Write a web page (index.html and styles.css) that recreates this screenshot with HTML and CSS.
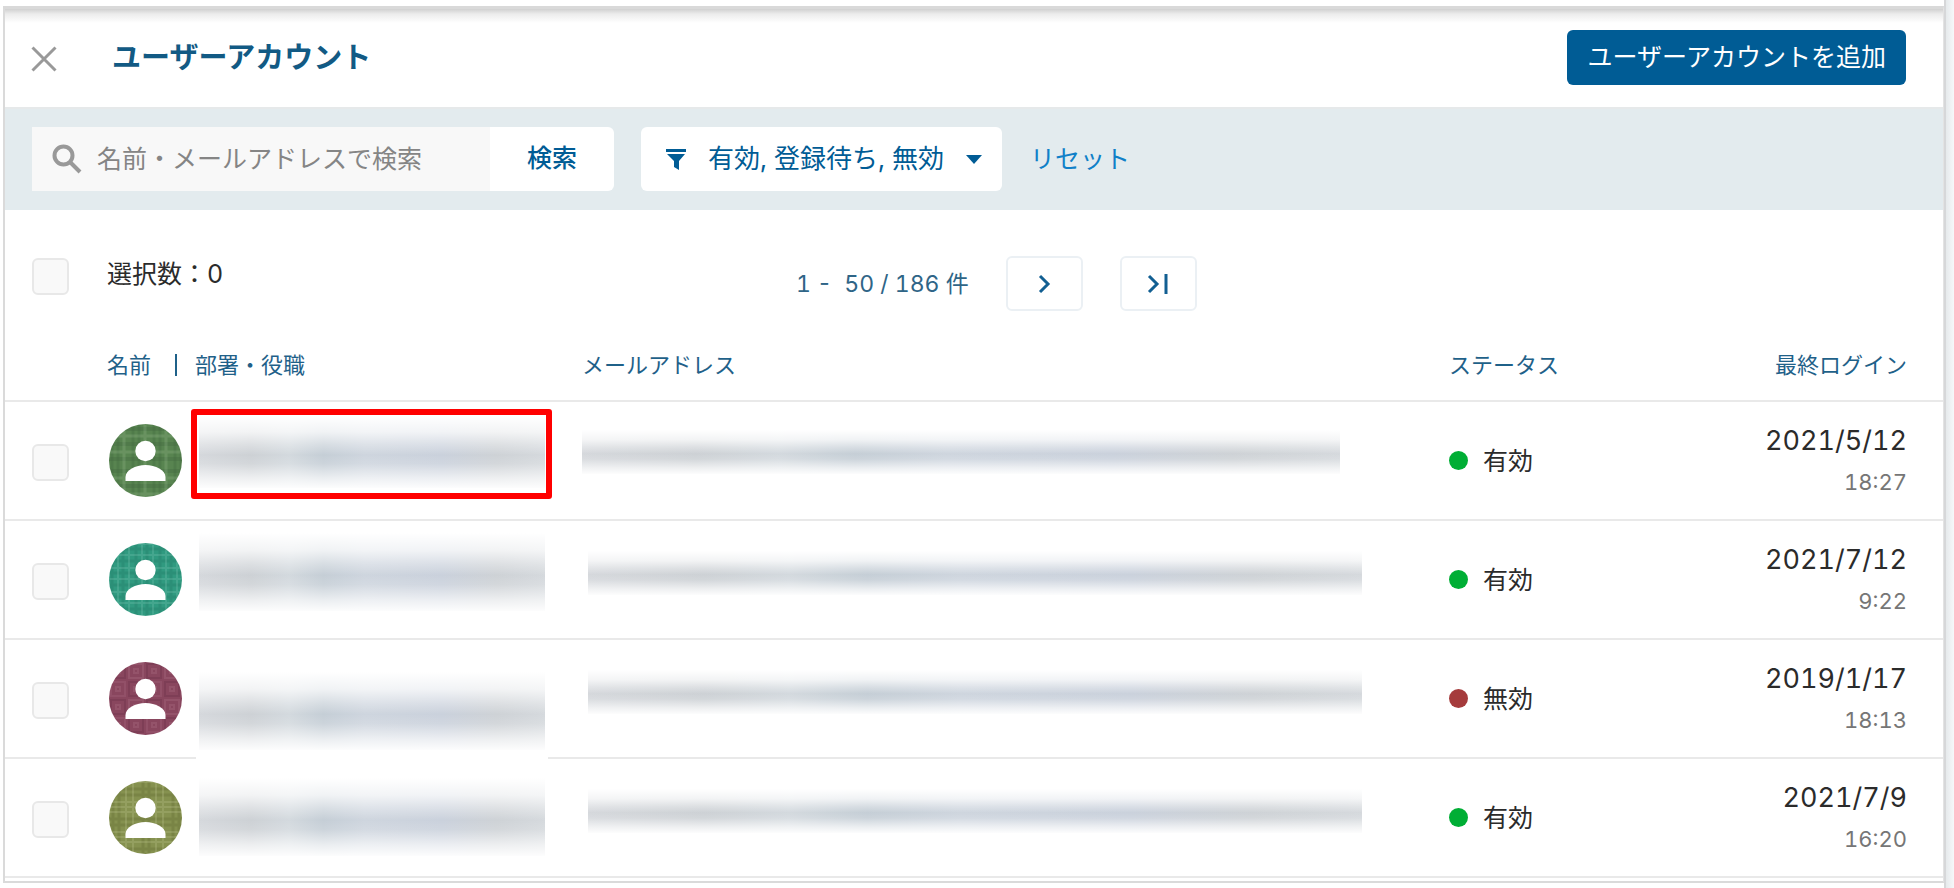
FILE: index.html
```html
<!DOCTYPE html>
<html lang="ja">
<head>
<meta charset="utf-8">
<meta name="viewport" content="width=device-width, initial-scale=1">
<title>ユーザーアカウント</title>
<link rel="stylesheet" href="styles.css">
</head>
<body>
<svg class="defs" aria-hidden="true">
  <defs>
    <pattern id="plaid-a" width="42" height="42" patternUnits="userSpaceOnUse">
      <rect width="42" height="42" fill="#588450"/>
      <path d="M3 0v42M9 0v42M24 0v42M30 0v42" stroke="#416b3e" stroke-opacity=".35" stroke-width="3"/>
      <path d="M0 5h42M0 20h42M0 35h42" stroke="#3f653d" stroke-opacity=".3" stroke-width="4"/>
      <path d="M15 0v42M36 0v42M0 12h42M0 28h42" stroke="#a5c39b" stroke-opacity=".22" stroke-width="3"/>
    </pattern>
    <pattern id="plaid-b" width="24" height="24" patternUnits="userSpaceOnUse">
      <rect width="24" height="24" fill="#309a80"/>
      <path d="M3 0v24M14 0v24M0 6h24M0 18h24" stroke="#1f7965" stroke-opacity=".3" stroke-width="3"/>
      <path d="M9 0v24M20 0v24M0 1h24M0 12h24" stroke="#8bd0bd" stroke-opacity=".22" stroke-width="2"/>
    </pattern>
    <pattern id="squares" width="36" height="36" patternUnits="userSpaceOnUse">
      <rect width="36" height="36" fill="#89465e"/>
      <rect x="2" y="2" width="14" height="14" fill="none" stroke="#6d334b" stroke-opacity=".4" stroke-width="2"/>
      <rect x="20" y="2" width="14" height="14" fill="none" stroke="#b47a91" stroke-opacity=".25" stroke-width="2"/>
      <rect x="2" y="20" width="14" height="14" fill="none" stroke="#b47a91" stroke-opacity=".2" stroke-width="2"/>
      <rect x="20" y="20" width="14" height="14" fill="none" stroke="#6d334b" stroke-opacity=".4" stroke-width="2"/>
      <path d="M7 7h4v4h-4zM25 7h4v4h-4zM7 25h4v4h-4zM25 25h4v4h-4z" fill="none" stroke="#b47a91" stroke-opacity=".25" stroke-width="2"/>
    </pattern>
    <pattern id="plaid-c" width="30" height="30" patternUnits="userSpaceOnUse">
      <rect width="30" height="30" fill="#85914f"/>
      <path d="M4 0v30M10 0v30M0 8h30M0 14h30" stroke="#626d34" stroke-opacity=".35" stroke-width="3"/>
      <path d="M17 0v30M24 0v30M0 1h30M0 21h30M0 26h30" stroke="#c0c894" stroke-opacity=".25" stroke-width="2"/>
    </pattern>
    <symbol id="person" viewBox="0 0 73 73">
      <circle cx="36.500" cy="27" r="10.200" fill="#fff"/>
      <path d="M16.500 57v-4c0-7 10-12 20-12s20 5 20 12v4z" fill="#fff"/>
    </symbol>
  </defs>
</svg>

<div class="page">
  <main class="panel">
    <header class="header">
      <button class="close" type="button" aria-label="閉じる">
        <svg viewBox="0 0 26 26" aria-hidden="true"><path d="M1.500 1.500l23 23M24.500 1.500l-23 23"/></svg>
      </button>
      <h1 class="title">ユーザーアカウント</h1>
      <button class="add" type="button">ユーザーアカウントを追加</button>
    </header>

    <div class="filters">
      <form class="search">
        <label class="search-field">
          <svg class="search-icon" viewBox="0 0 30 30" aria-hidden="true"><circle cx="11.500" cy="11.500" r="9"/><path d="M18 18l10 10"/></svg>
          <input type="search" placeholder="名前・メールアドレスで検索" aria-label="名前・メールアドレスで検索">
        </label>
        <button class="search-submit" type="button">検索</button>
      </form>
      <label class="status-filter">
        <svg class="funnel" viewBox="0 0 20 21" aria-hidden="true"><path d="M0 0h20v3H0zM1 5h18l-6 7v9l-5-3v-6z"/></svg>
        <select aria-label="ステータス">
          <option>有効, 登録待ち, 無効</option>
        </select>
        <svg class="caret" viewBox="0 0 16 9" aria-hidden="true"><path d="M0 0h16L8 9z"/></svg>
      </label>
      <a class="reset" href="#">リセット</a>
    </div>

    <div class="toolbar">
      <label class="selection">
        <input class="check" type="checkbox">
        <span>選択数：0</span>
      </label>
      <nav class="pager" aria-label="ページ送り">
        <span class="range">1 -&nbsp; 50 / 186 件</span>
        <button class="page-button" type="button" aria-label="次のページ">
          <svg viewBox="0 0 24 24" aria-hidden="true"><path d="M8 4l8 8-8 8"/></svg>
        </button>
        <button class="page-button" type="button" aria-label="最後のページ">
          <svg viewBox="0 0 24 24" aria-hidden="true"><path d="M3 4l8 8-8 8M20 2v20"/></svg>
        </button>
      </nav>
    </div>

    <table class="users">
      <colgroup>
        <col class="col-check"><col class="col-user"><col><col class="col-status"><col class="col-login">
      </colgroup>
      <thead>
        <tr>
          <td></td>
          <th scope="col"><div class="user-heading"><span>名前</span><span class="department">部署・役職</span></div></th>
          <th scope="col">メールアドレス</th>
          <th scope="col">ステータス</th>
          <th scope="col" class="login">最終ログイン</th>
        </tr>
      </thead>
      <tbody>
        <tr>
          <td class="check-cell"><input class="check" type="checkbox" aria-label="選択"></td>
          <td class="user-cell">
            <svg class="avatar" viewBox="0 0 73 73" aria-hidden="true"><circle cx="36.500" cy="36.500" r="36.500" fill="url(#plaid-a)"/><use href="#person"/></svg>
            <div class="mask name-mask upper"></div>
            <div class="highlight"></div>
          </td>
          <td class="mail-cell"><div class="mask mail-mask first"></div></td>
          <td><span class="status">有効</span></td>
          <td class="login"><div class="date">2021/5/12</div><div class="time">18:27</div></td>
        </tr>
        <tr>
          <td class="check-cell"><input class="check" type="checkbox" aria-label="選択"></td>
          <td class="user-cell">
            <svg class="avatar" viewBox="0 0 73 73" aria-hidden="true"><circle cx="36.500" cy="36.500" r="36.500" fill="url(#plaid-b)"/><use href="#person"/></svg>
            <div class="mask name-mask"></div>
          </td>
          <td class="mail-cell"><div class="mask mail-mask"></div></td>
          <td><span class="status">有効</span></td>
          <td class="login"><div class="date">2021/7/12</div><div class="time">9:22</div></td>
        </tr>
        <tr>
          <td class="check-cell"><input class="check" type="checkbox" aria-label="選択"></td>
          <td class="user-cell">
            <svg class="avatar" viewBox="0 0 73 73" aria-hidden="true"><circle cx="36.500" cy="36.500" r="36.500" fill="url(#squares)"/><use href="#person"/></svg>
            <div class="mask name-mask lower"></div>
          </td>
          <td class="mail-cell"><div class="mask mail-mask"></div></td>
          <td><span class="status inactive">無効</span></td>
          <td class="login"><div class="date">2019/1/17</div><div class="time">18:13</div></td>
        </tr>
        <tr>
          <td class="check-cell"><input class="check" type="checkbox" aria-label="選択"></td>
          <td class="user-cell">
            <svg class="avatar" viewBox="0 0 73 73" aria-hidden="true"><circle cx="36.500" cy="36.500" r="36.500" fill="url(#plaid-c)"/><use href="#person"/></svg>
            <div class="mask name-mask middle"></div>
          </td>
          <td class="mail-cell"><div class="mask mail-mask"></div></td>
          <td><span class="status">有効</span></td>
          <td class="login"><div class="date">2021/7/9</div><div class="time">16:20</div></td>
        </tr>
      </tbody>
    </table>
  </main>
  <div class="edge"></div>
</div>
</body>
</html>
```

FILE: styles.css
```css
* {
  box-sizing: border-box;
}

body {
  margin: 0;
  background: #fff;
  color: #2b2b2b;
  font-family: Inter, "Noto Sans CJK JP", sans-serif;
  font-size: 25px;
  line-height: 36px;
  font-variant-numeric: tabular-nums;
}

button,
input,
select {
  margin: 0;
  padding: 0;
  border: 0;
  background: none;
  color: inherit;
  font: inherit;
}

svg {
  display: block;
  flex: none;
}

.defs {
  position: absolute;
  width: 0;
  height: 0;
}

.page {
  display: grid;
  grid-template-columns: minmax(0, 1fr) 10px;
  min-height: 100vh;
}

.edge {
  border-left: 2px solid #d6d7d9;
  background: linear-gradient(to right, #e6eaec, #f6f8fa);
}

.panel {
  align-self: start;
  margin: 6px 0 5px 3px;
  padding-bottom: 3px;
  border: 2px solid #dadada;
  border-top: 3px solid #d9d9d9;
  border-right: 1px solid #e3e3e3;
}

/* Header */
.header {
  display: flex;
  align-items: center;
  padding: 21px 37px 22px 26px;
  background: linear-gradient(#d0d0d0, #ececec 5px, #fff 14px);
}

.close {
  padding-top: 2px;
}

.close svg {
  width: 26px;
  height: 26px;
  fill: none;
  stroke: #999;
  stroke-width: 3;
}

.title {
  margin: 0 auto 0 55px;
  color: #125a84;
  font-size: 29px;
  font-weight: 700;
}

.add {
  height: 55px;
  padding: 0 20px 2px;
  border-radius: 6px;
  background: #005c95;
  color: #fff;
}

/* Filters */
.filters {
  display: flex;
  align-items: center;
  padding: 18px 27px 19px;
  border-top: 2px solid #e6e9ea;
  background: #e3ebee;
}

.search {
  display: flex;
  height: 64px;
}

.search-field {
  display: flex;
  align-items: center;
  width: 458px;
  padding: 0 20px;
  gap: 15px;
  background: #f8f8f8;
}

.search-icon {
  width: 30px;
  height: 30px;
  fill: none;
  stroke: #999;
  stroke-width: 4;
}

.search-field input {
  flex: 1;
  min-width: 0;
  outline: 0;
}

.search-field input::placeholder {
  color: #858585;
  opacity: 1;
}

.search-submit {
  width: 124px;
  padding-bottom: 2px;
  border-radius: 0 6px 6px 0;
  background: #fff;
  color: #005c95;
  font-weight: 500;
}

.status-filter {
  display: flex;
  align-items: center;
  height: 64px;
  margin: 0 28px 0 27px;
  padding: 0 20px 0 25px;
  border-radius: 6px;
  background: #fff;
  color: #005c95;
}

.status-filter select {
  width: 258px;
  height: 38px;
  margin-left: 22px;
  font-size: 26px;
  appearance: none;
}

.funnel {
  width: 20px;
  height: 21px;
  fill: #005c95;
}

.caret {
  width: 16px;
  height: 9px;
  fill: #005c95;
}

.reset {
  color: #1080c8;
  text-decoration: none;
}

/* Selection count and pager */
.toolbar {
  display: grid;
  grid-template-columns: 102px 12fr auto 13fr;
  padding-top: 46px;
}

.selection {
  display: flex;
  grid-column: 1 / 3;
  gap: 38px;
  padding-left: 27px;
}

.check {
  width: 37px;
  height: 37px;
  border: 2px solid #e8e8e8;
  border-radius: 6px;
  background: #f9f9f9;
  appearance: none;
}

.selection .check {
  margin-top: 2px;
}

.pager {
  display: flex;
  align-items: center;
  gap: 37px;
  color: #2f6587;
}

.range {
  font-size: 23px;
}

.page-button {
  display: grid;
  place-items: center;
  width: 77px;
  height: 55px;
  border: 2px solid #ebf0f4;
  border-radius: 6px;
}

.page-button svg {
  width: 24px;
  height: 24px;
  fill: none;
  stroke: #125f92;
  stroke-width: 3;
}

/* User table */
.users {
  width: 100%;
  border-spacing: 0;
  table-layout: fixed;
}

.col-check {
  width: 102px;
}

.col-user {
  width: 475px;
}

.col-status {
  width: 238px;
}

.col-login {
  width: 256px;
}

.users th {
  padding: 38px 0 19px;
  color: #1f6189;
  font-size: 22px;
  font-weight: 400;
  line-height: 32px;
  text-align: left;
}

.user-heading {
  display: flex;
  align-items: center;
}

.department {
  display: flex;
  align-items: center;
  gap: 18px;
  margin-left: 24px;
}

.department::before {
  width: 2px;
  height: 22px;
  background: #1f6189;
  content: "";
}

.users tbody td {
  height: 119px;
  padding: 0;
  border-top: 2px solid #e9e9e9;
  vertical-align: middle;
}

.users tbody tr:last-child td {
  height: 121px;
  border-bottom: 2px solid #e9e9e9;
}

.users tbody .check-cell {
  padding-top: 3px;
  padding-left: 27px;
}

.check-cell .check {
  display: block;
}

.users .user-cell,
.users .mail-cell {
  position: relative;
}

.users .user-cell {
  padding-left: 2px;
}

.avatar {
  width: 73px;
  height: 73px;
}

.users .login {
  padding-right: 36px;
  text-align: right;
}

.status {
  display: flex;
  align-items: center;
  gap: 15px;
}

.status::before {
  width: 19px;
  height: 19px;
  border-radius: 50%;
  background: #00ae35;
  content: "";
}

.status.inactive::before {
  background: #a53b3c;
}

.date {
  font-size: 27px;
  line-height: 42px;
}

.time {
  color: #767676;
  font-size: 22px;
  line-height: 40px;
}

/* Redacted names and addresses */
.mask {
  position: absolute;
  z-index: 1;
  background:
    linear-gradient(#fff, rgba(255, 255, 255, .75) 22%, rgba(255, 255, 255, .3) 40%, rgba(255, 255, 255, 0) 54%, rgba(255, 255, 255, .12) 66%, rgba(255, 255, 255, .65) 86%, rgba(255, 255, 255, .95)),
    linear-gradient(to right, #d5d8dc, #cdd1d5 15%, #d3d9de 26%, #c5ced6 36%, #ced5de 48%, #cad1dc 70%, #ced2d6 86%, #d5d9dd);
}

.name-mask {
  top: 12px;
  left: 92px;
  width: 346px;
  height: 78px;
}

.name-mask.upper {
  top: 14px;
  height: 72px;
}

.name-mask.lower {
  top: 32px;
  box-shadow: 0 7px 0 3px #fff;
}

.name-mask.middle {
  top: 19px;
}

.mail-mask {
  top: 30px;
  left: 6px;
  width: calc(100% - 93px);
  height: 44px;
}

.mail-mask.first {
  top: 28px;
  left: 0;
  width: calc(100% - 109px);
}

.highlight {
  position: absolute;
  z-index: 2;
  top: 7px;
  left: 84px;
  width: 361px;
  height: 90px;
  border: 6px solid #f00;
  border-radius: 3px;
}

@media (max-width: 1300px) {
  .filters {
    flex-wrap: wrap;
    gap: 16px;
  }

  .status-filter {
    margin: 0;
  }
}
```
